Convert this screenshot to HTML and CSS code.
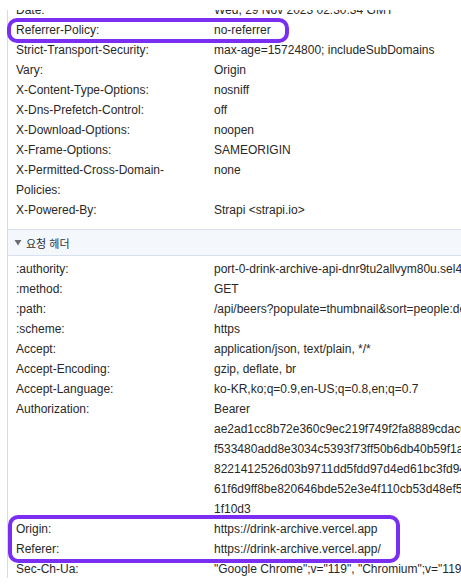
FILE: index.html
```html
<!DOCTYPE html>
<html lang="ko">
<head>
<meta charset="utf-8">
<title>Headers</title>
<link rel="stylesheet" href="styles.css">
</head>
<body>
<div class="viewport">
  <div class="content">
    <div class="group">
      <div class="row"><div class="key">Date:</div><div class="val">Wed, 29 Nov 2023 02:30:34 GMT</div></div>
      <div class="row"><div class="key">Referrer-Policy:</div><div class="val">no-referrer</div></div>
      <div class="row"><div class="key">Strict-Transport-Security:</div><div class="val">max-age=15724800; includeSubDomains</div></div>
      <div class="row"><div class="key">Vary:</div><div class="val">Origin</div></div>
      <div class="row"><div class="key">X-Content-Type-Options:</div><div class="val">nosniff</div></div>
      <div class="row"><div class="key">X-Dns-Prefetch-Control:</div><div class="val">off</div></div>
      <div class="row"><div class="key">X-Download-Options:</div><div class="val">noopen</div></div>
      <div class="row"><div class="key">X-Frame-Options:</div><div class="val">SAMEORIGIN</div></div>
      <div class="row"><div class="key">X-Permitted-Cross-Domain-Policies:</div><div class="val">none</div></div>
      <div class="row"><div class="key">X-Powered-By:</div><div class="val">Strapi &lt;strapi.io&gt;</div></div>
    </div>
    <div class="section-head">
      <svg class="tri" width="8" height="7" viewBox="0 0 8 7"><path d="M0.5 1 L7.5 1 L4 6.5 Z" fill="#6b6f75"/></svg>
      <span class="section-title">요청 헤더</span>
    </div>
    <div class="group group-req">
      <div class="row"><div class="key">:authority:</div><div class="val">port-0-drink-archive-api-dnr9tu2allvym80u.sel4.cloudtype.app</div></div>
      <div class="row"><div class="key">:method:</div><div class="val">GET</div></div>
      <div class="row"><div class="key">:path:</div><div class="val">/api/beers?populate=thumbnail&amp;sort=people:desc</div></div>
      <div class="row"><div class="key">:scheme:</div><div class="val">https</div></div>
      <div class="row"><div class="key">Accept:</div><div class="val">application/json, text/plain, */*</div></div>
      <div class="row"><div class="key">Accept-Encoding:</div><div class="val">gzip, deflate, br</div></div>
      <div class="row"><div class="key">Accept-Language:</div><div class="val">ko-KR,ko;q=0.9,en-US;q=0.8,en;q=0.7</div></div>
      <div class="row">
        <div class="key">Authorization:</div>
        <div class="val">
          <div>Bearer</div>
          <div>ae2ad1cc8b72e360c9ec219f749f2fa8889cdac0e1b3</div>
          <div>f533480add8e3034c5393f73ff50b6db40b59f1a2c7d</div>
          <div>8221412526d03b9711dd5fdd97d4ed61bc3fd94e0a1b</div>
          <div>61f6d9ff8be820646bde52e3e4f110cb53d48ef5c2a9</div>
          <div>1f10d3</div>
        </div>
      </div>
      <div class="row"><div class="key">Origin:</div><div class="val">https://drink-archive.vercel.app</div></div>
      <div class="row"><div class="key">Referer:</div><div class="val">https://drink-archive.vercel.app/</div></div>
      <div class="row"><div class="key">Sec-Ch-Ua:</div><div class="val">"Google Chrome";v="119", "Chromium";v="119", "Not?A_Brand";v="24"</div></div>
    </div>
  </div>
</div>
<div class="mark mark-one"></div>
<div class="mark mark-two"></div>
</body>
</html>
```

FILE: styles.css
```css
html, body {
  margin: 0;
  padding: 0;
  background: #ffffff;
  overflow: hidden;
}

body {
  width: 461px;
  height: 584px;
  position: relative;
  font-family: "Liberation Sans", Arial, "Noto Sans CJK KR", sans-serif;
  font-size: 12px;
  line-height: 20px;
  color: #282828;
}

.viewport {
  margin-top: 10px;
  margin-left: 7px;
  height: 568px;
  border-left: 1px solid #d3dbea;
  overflow: hidden;
}

.content {
  margin-top: -10px;
  width: 700px;
}

.group {
  display: flex;
  flex-direction: column;
}

.row {
  display: grid;
  grid-template-columns: 198px 1fr;
  padding-left: 8px;
}

.key {
  padding-right: 16px;
}

.val {
  white-space: nowrap;
}

.group-req {
  padding-top: 3px;
}

.section-head {
  margin-top: 9px;
  height: 25px;
  border-top: 1px solid #d6e0f0;
  border-bottom: 1px solid #d6e0f0;
  background: #f4f7fc;
  display: flex;
  align-items: center;
  gap: 4px;
  padding-left: 6px;
  color: #303030;
}

.tri {
  display: block;
}

.section-title {
  font-family: "Noto Sans CJK KR", "Liberation Sans", sans-serif;
  font-size: 11px;
  line-height: 14px;
}

.mark {
  position: absolute;
  border: 4px solid #7a2ef2;
  border-radius: 10px;
  box-sizing: border-box;
}

.mark-one {
  left: 7px;
  top: 18px;
  width: 282px;
  height: 25px;
}

.mark-two {
  left: 8px;
  top: 515px;
  width: 392px;
  height: 48px;
}
```
